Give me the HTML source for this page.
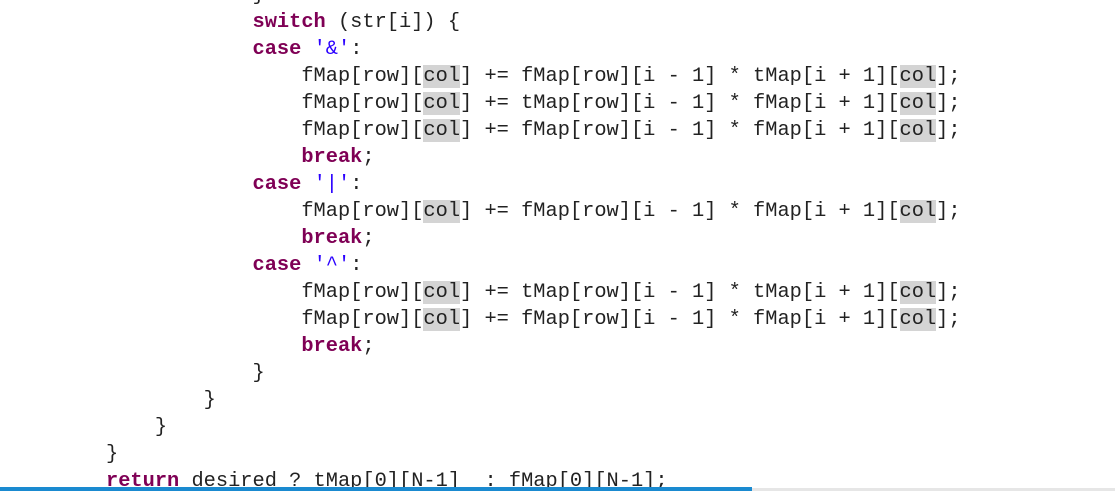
<!DOCTYPE html>
<html><head><style>
html,body{margin:0;padding:0;background:#fff;width:1115px;height:493px;overflow:hidden}
pre{position:absolute;left:106px;top:-18px;margin:0;font-family:"Liberation Mono",monospace;font-size:20.35px;line-height:27px;color:#222;letter-spacing:0}
.k{color:#7f0055;font-weight:bold}
.s{color:#2a00ff}
.h{background:#d4d4d4}
.bar{position:absolute;left:0;top:487px;width:752px;height:4px;background:#1a8ad0}
.bar2{position:absolute;left:752px;top:488px;width:363px;height:3px;background:#e6e6e6}
</style></head><body>
<pre>            }
            <span class="k">switch</span> (str[i]) {
            <span class="k">case</span> <span class="s">'&amp;'</span>:
                fMap[row][<span class="h">col</span>] += fMap[row][i - 1] * tMap[i + 1][<span class="h">col</span>];
                fMap[row][<span class="h">col</span>] += tMap[row][i - 1] * fMap[i + 1][<span class="h">col</span>];
                fMap[row][<span class="h">col</span>] += fMap[row][i - 1] * fMap[i + 1][<span class="h">col</span>];
                <span class="k">break</span>;
            <span class="k">case</span> <span class="s">'|'</span>:
                fMap[row][<span class="h">col</span>] += fMap[row][i - 1] * fMap[i + 1][<span class="h">col</span>];
                <span class="k">break</span>;
            <span class="k">case</span> <span class="s">'^'</span>:
                fMap[row][<span class="h">col</span>] += tMap[row][i - 1] * tMap[i + 1][<span class="h">col</span>];
                fMap[row][<span class="h">col</span>] += fMap[row][i - 1] * fMap[i + 1][<span class="h">col</span>];
                <span class="k">break</span>;
            }
        }
    }
}
<span class="k">return</span> desired ? tMap[0][N-1]  : fMap[0][N-1];</pre>
<div class="bar"></div><div class="bar2"></div>
</body></html>
